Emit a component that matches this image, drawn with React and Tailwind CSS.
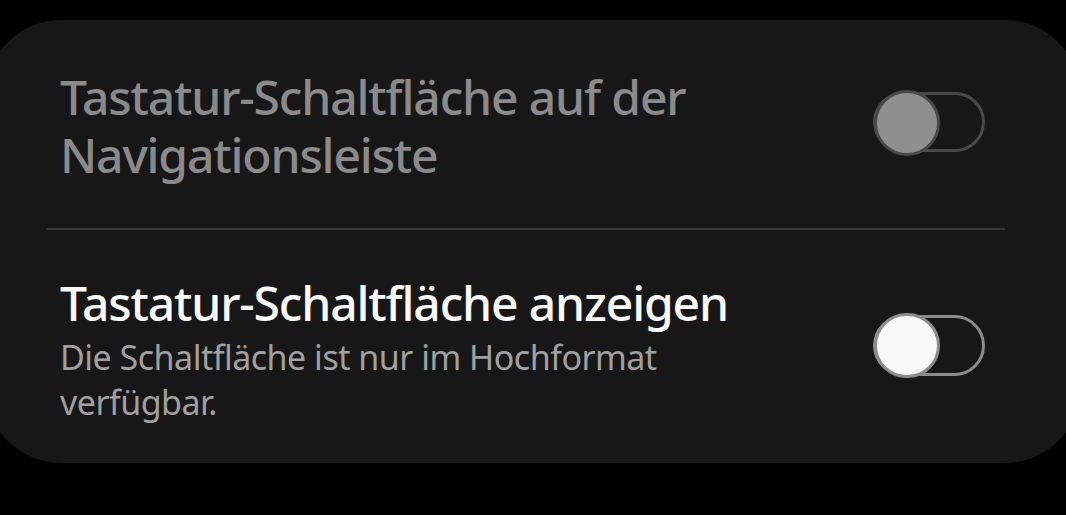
export default function App() {
  return (
    <div className="h-[515px] w-[1066px] overflow-hidden bg-black pt-[20px] font-['Noto_Sans',sans-serif]">
      <div className="ml-[-14px] h-[443px] w-[1094px] rounded-[75px] bg-[#171717]">
        {/* disabled row */}
        <div className="flex h-[208px] items-start justify-between pl-[74px] pr-[95px]">
          <div className="pt-[48px] text-[48px] font-medium leading-[58px] tracking-[-1.15px] text-[#8a8a8a]">
            Tastatur-Schaltfläche auf der
            <br />
            Navigationsleiste
          </div>
          <Toggle disabled />
        </div>

        <div className="ml-[60px] mr-[75px] h-[2px] bg-[#363636]" />

        <div className="flex items-start justify-between pl-[74px] pr-[95px]">
          <div className="pt-[47px]">
            <div className="text-[48px] font-medium leading-[52px] tracking-[-1.15px] text-[#fafafa]">
              Tastatur-Schaltfläche anzeigen
            </div>
            <div className="mt-[6px] text-[34px] leading-[45px] tracking-[-0.5px] text-[#a0a0a0]">
              Die Schaltfläche ist nur im Hochformat
              <br />
              verfügbar.
            </div>
          </div>
          <Toggle />
        </div>
      </div>
    </div>
  );
}

function Toggle({ disabled }) {
  return (
    <div
      className={
        disabled
          ? "relative mt-[72px] h-[60px] w-[112px] shrink-0 rounded-full border-[3px] border-[#494949]"
          : "relative mt-[85px] h-[61px] w-[112px] shrink-0 rounded-full border-[3px] border-[#8c8c8c]"
      }
    >
      <div
        className={
          disabled
            ? "absolute left-[-2px] top-[-5px] h-[66px] w-[66px] rounded-full border-[3px] border-[#494949] bg-[#8f8f8f]"
            : "absolute left-[-2px] top-[-5px] h-[65px] w-[66px] rounded-full border-[3px] border-[#8c8c8c] bg-[#f8f8f8]"
        }
      />
    </div>
  );
}
